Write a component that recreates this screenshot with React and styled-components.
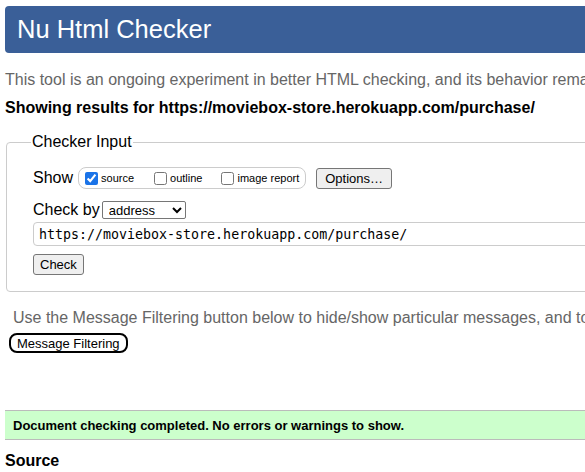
import React from 'react'
import styled, { createGlobalStyle } from 'styled-components'

const GlobalStyle = createGlobalStyle`
  html, body {
    margin: 0;
    padding: 0;
    background: #fff;
    overflow: hidden;
  }
  body {
    font-family: "Liberation Sans", Arial, sans-serif;
    color: #000;
  }
`

const Page = styled.div`
  width: 900px;
  padding: 6px 0 0 5px;
`

const Header = styled.h1`
  margin: 0;
  height: 47px;
  display: flex;
  align-items: center;
  padding-left: 12px;
  background: #3a5f98;
  color: #fff;
  border-radius: 4px;
  font-size: 25.5px;
  font-weight: normal;
`

const Intro = styled.p`
  margin: 18px 0 0;
  font-size: 16px;
  line-height: 18px;
  color: #666;
  white-space: nowrap;
`

const Results = styled.p`
  margin: 10px 0 0;
  font-size: 16px;
  line-height: 18px;
  font-weight: bold;
  white-space: nowrap;
`

const Fieldset = styled.fieldset`
  margin: 16px 0 0 1px;
  padding: 16px 26px 16px;
  border: 1px solid #ccc;
  border-radius: 4px;
  display: flex;
  flex-direction: column;
`

const Legend = styled.legend`
  font-size: 16px;
  padding: 0 1px;
  margin-left: -2px;
`

const Row = styled.div`
  display: flex;
  align-items: center;
  font-size: 16px;
  margin-top: ${p => p.$top || 0}px;
`

const Label = styled.span`
  margin-right: ${p => p.$gap || 4}px;
`

const Pill = styled.div`
  display: flex;
  align-items: center;
  height: 20px;
  border: 1px solid #ccc;
  border-radius: 8px;
  padding: 0 6px 0 4px;
  margin-right: 10px;
`

const Option = styled.label`
  display: flex;
  align-items: center;
  font-size: 11px;
  margin-right: ${p => p.$gap || 0}px;
  input {
    width: 13px;
    height: 13px;
    margin: 0 3px 0 2px;
    accent-color: #1a73e8;
  }
`

const Button = styled.button`
  font-family: "Liberation Sans", Arial, sans-serif;
  font-size: 13px;
  height: 21px;
  padding: 0 ${p => p.$pad || 6}px;
  background: #efefef;
  border: 1px solid #767676;
  border-radius: 3px;
  color: #000;
`

const Select = styled.select`
  font-family: "Liberation Sans", Arial, sans-serif;
  font-size: 13px;
  width: 84px;
  height: 18px;
  padding: 0 2px;
  border: 1px solid #767676;
  border-radius: 2px;
  background: #fff;
  color: #000;
`

const UrlInput = styled.input`
  margin-top: 3px;
  width: 700px;
  height: 24px;
  box-sizing: border-box;
  padding: 0 5px;
  border: 1px solid #ccc;
  border-radius: 4px;
  font-family: "DejaVu Sans Mono", Menlo, monospace;
  font-size: 13.3px;
  color: #000;
`

const FilterNote = styled.p`
  margin: 17px 0 0 8px;
  font-size: 16px;
  line-height: 18px;
  color: #666;
  white-space: nowrap;
`

const FilterButton = styled.button`
  margin: 6px 0 0 4px;
  font-family: "Liberation Sans", Arial, sans-serif;
  font-size: 13px;
  height: 20px;
  padding: 0 6px;
  background: #fff;
  border: 2px solid #000;
  border-radius: 8px;
  color: #000;
`

const Success = styled.div`
  margin-top: 57px;
  height: 30px;
  box-sizing: border-box;
  display: flex;
  align-items: center;
  padding-left: 8px;
  background: #ccffcc;
  border-top: 1px solid #bbb;
  border-bottom: 1px solid #bbb;
  font-size: 13px;
  font-weight: bold;
`

const SourceTitle = styled.h2`
  margin: 12px 0 0;
  font-size: 16px;
  line-height: 18px;
  font-weight: bold;
`

export default function App() {
  return (
    <Page>
      <GlobalStyle />
      <Header>Nu Html Checker</Header>
      <Intro>This tool is an ongoing experiment in better HTML checking, and its behavior remains subject to change</Intro>
      <Results>Showing results for https://moviebox-store.herokuapp.com/purchase/</Results>
      <Fieldset>
        <Legend>Checker Input</Legend>
        <Row>
          <Label $gap={5}>Show</Label>
          <Pill>
            <Option $gap={18}><input type="checkbox" defaultChecked />source</Option>
            <Option $gap={17}><input type="checkbox" />outline</Option>
            <Option><input type="checkbox" />image report</Option>
          </Pill>
          <Button $pad={8}>Options…</Button>
        </Row>
        <Row $top={12}>
          <Label $gap={2}>Check by</Label>
          <Select defaultValue="address">
            <option value="address">address</option>
            <option value="file">file upload</option>
            <option value="text">text input</option>
          </Select>
        </Row>
        <UrlInput defaultValue="https://moviebox-store.herokuapp.com/purchase/" />
        <Row $top={8}>
          <Button>Check</Button>
        </Row>
      </Fieldset>
      <FilterNote>Use the Message Filtering button below to hide/show particular messages, and to see total counts of errors and warnings.</FilterNote>
      <FilterButton>Message Filtering</FilterButton>
      <Success>Document checking completed. No errors or warnings to show.</Success>
      <SourceTitle>Source</SourceTitle>
    </Page>
  )
}
